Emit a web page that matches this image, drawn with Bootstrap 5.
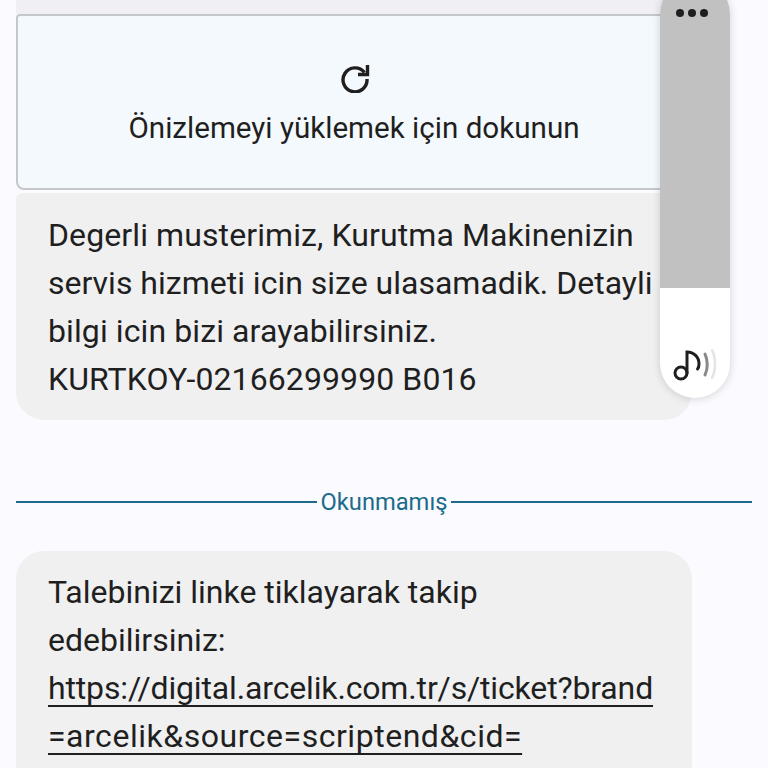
<!DOCTYPE html>
<html lang="tr">
<head>
  <meta charset="UTF-8" />
  <title>Mesajlar</title>
  <link href="https://cdn.jsdelivr.net/npm/bootstrap@5.3.3/dist/css/bootstrap.min.css" rel="stylesheet" />
  <style>
    html, body { height: 768px; overflow: hidden; }
    body { background: #fbfaff; color: #1f1f1f; font-family: Roboto, "Noto Sans", sans-serif; }
    .chat-wrap { height: 768px; overflow: hidden; padding-left: 16px; }
    .top-strip { width: 676px; height: 14px; background: #f0eff3; }
    .preview-box { width: 676px; height: 176px; background: #f4f9fd; border: 2px solid #c4c7cb; border-radius: 4px 4px 8px 8px; font-size: 29.6px; line-height: 36px; padding-top: 2px; }
    .preview-box svg { width: 32px; height: 32px; margin-bottom: 17px; margin-left: 2px; }
    .msg-bubble { width: 676px; background: #f0f0f1; padding: 18px 16px 16px 32px; font-size: 32px; line-height: 48px; letter-spacing: .1px; }
    .msg-first { margin-top: 3px; border-radius: 6px 6px 28px 28px; height: 227px; }
    .msg-second { border-radius: 28px 28px 0 0; height: 240px; margin-top: 37px; padding-top: 17px; letter-spacing: 0; }
    .line-tight { letter-spacing: 0; }
    .msg-second a { color: #1f1f1f; text-decoration: underline; text-decoration-thickness: 2px; text-underline-offset: 6px; text-decoration-skip-ink: none; }
    .link-one { letter-spacing: -.15px; }
    .link-two { letter-spacing: .53px; }
    .unread-row { width: 736px; height: 24px; margin-top: 70px; color: #1c6b8a; font-size: 23.7px; line-height: 24px; }
    .unread-line { flex: 1; height: 2px; background: #1c6b8a; }
    .side-handle { position: absolute; left: 660px; top: -21px; width: 70px; height: 419px; background: #fff; border-radius: 35px; box-shadow: 0 1px 8px rgba(0,0,0,.16); overflow: hidden; }
    .handle-fill { height: 309px; background: #c1c1c1; }
    .handle-dots { position: absolute; left: 16px; top: 30px; }
    .handle-dots span { width: 8px; height: 8px; border-radius: 50%; background: #1f1f1f; }
    .handle-note { position: absolute; left: 12px; top: 365px; width: 46px; height: 40px; }
  </style>
</head>
<body>
  <div class="chat-wrap">
    <div class="top-strip"></div>
    <div class="preview-box d-flex flex-column align-items-center justify-content-center">
      <svg viewBox="0 0 32 32" fill="none" stroke="#1f1f1f" stroke-width="3.4">
        <path d="M25.5 11.5A12 12 0 1 0 28 18" />
        <path d="M28.5 4v9.5H19" />
      </svg>
      <div>Önizlemeyi yüklemek için dokunun</div>
    </div>
    <div class="msg-bubble msg-first">
      Degerli musterimiz, Kurutma Makinenizin<br />
      <span class="line-tight">servis hizmeti icin size ulasamadik. Detayli</span><br />
      bilgi icin bizi arayabilirsiniz.<br />
      KURTKOY-02166299990 B016
    </div>
    <div class="unread-row d-flex align-items-center gap-1">
      <div class="unread-line"></div>
      <div>Okunmamış</div>
      <div class="unread-line"></div>
    </div>
    <div class="msg-bubble msg-second">
      Talebinizi linke tiklayarak takip<br />
      edebilirsiniz:<br />
      <a href="#"><span class="link-one">https://digital.arcelik.com.tr/s/ticket?brand</span><br /><span class="link-two">=arcelik&amp;source=scriptend&amp;cid=</span></a>
    </div>
  </div>

  <div class="side-handle">
    <div class="handle-fill"></div>
    <div class="handle-dots d-flex gap-1">
      <span></span><span></span><span></span>
    </div>
    <svg class="handle-note" viewBox="0 0 46 40" fill="none" stroke-linecap="round">
      <circle cx="9" cy="29" r="6" stroke="#1f1f1f" stroke-width="3" />
      <path d="M15 29V8c7 0 12 5 12 12 0 2-.5 4-1.500 5" stroke="#1f1f1f" stroke-width="3" />
      <path d="M33 10c3 6 3 15 0 21" stroke="#8a8a8a" stroke-width="3" />
      <path d="M40 6c4 8 4 20 0 28" stroke="#e4e4e4" stroke-width="2.500" />
    </svg>
  </div>

  <script src="https://cdn.jsdelivr.net/npm/bootstrap@5.3.3/dist/js/bootstrap.bundle.min.js"></script>
</body>
</html>
